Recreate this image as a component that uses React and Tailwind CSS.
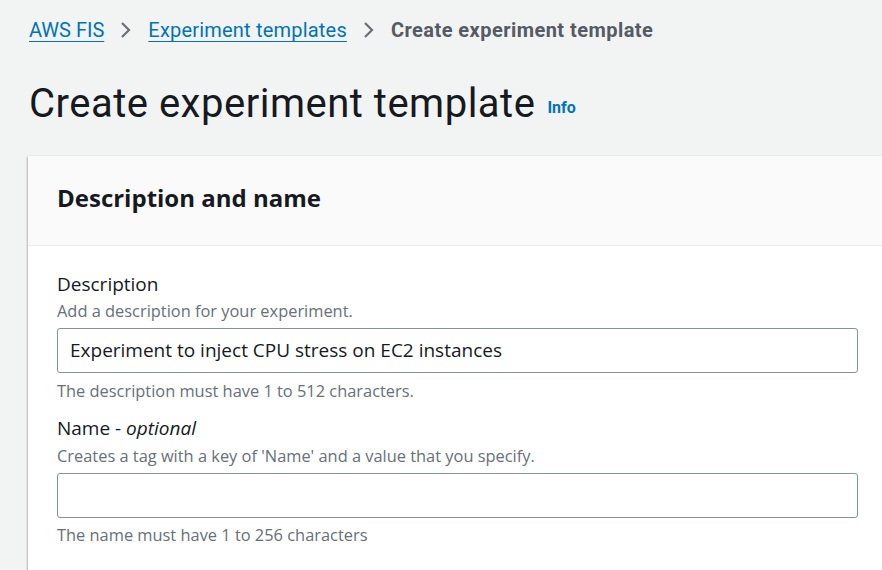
import React from "react";

function Chevron() {
  return (
    <svg width="14" height="20" viewBox="0 0 14 20" className="mx-[15px]">
      <path d="M3 3 L10 10 L3 17" fill="none" stroke="#687078" strokeWidth="2.2" />
    </svg>
  );
}

export default function App() {
  return (
    <div className="w-[882px] h-[570px] overflow-hidden bg-[#f2f3f3] font-['Open_Sans',sans-serif] text-[#16191f]">
      <div className="pl-[29px] pt-[15px]">
        <nav className="flex items-center h-[30px] font-['Roboto',sans-serif] text-[20px]">
          <a className="text-[#0073bb] underline underline-offset-4 decoration-1">AWS FIS</a>
          <Chevron />
          <a className="text-[#0073bb] underline underline-offset-4 decoration-1 tracking-[0.2px]">Experiment templates</a>
          <Chevron />
          <span className="text-[#545b64] font-bold tracking-[0.45px]">Create experiment template</span>
        </nav>
        <div className="flex items-baseline mt-[34px] h-[50px]">
          <h1 className="font-['Roboto',sans-serif] font-normal text-[40px] leading-[50px] tracking-[0.5px]">Create experiment template</h1>
          <span className="ml-[12px] text-[#0073bb] font-bold text-[16px] font-['Roboto',sans-serif] relative top-[-4px]">Info</span>
        </div>
      </div>
      <div className="ml-[28px] mt-[27px] bg-white shadow-[0_1px_2px_rgba(0,28,36,0.3),1px_1px_2px_rgba(0,28,36,0.15),-1px_1px_2px_rgba(0,28,36,0.15)]">
        <div className="h-[90px] bg-[#fafafa] border-b border-[#eaeded] flex items-center pl-[29px] pb-[6px]">
          <h2 className="text-[24px] font-bold">Description and name</h2>
        </div>
        <div className="pl-[29px] pr-[24px] pt-[25px]">
          <div className="text-[19px] leading-[26px]">Description</div>
          <div className="text-[16.4px] leading-[22px] text-[#687078] mt-[3px]">Add a description for your experiment.</div>
          <div className="mt-[6px] h-[45px] w-[801px] border border-[#879196] rounded-[3px] flex items-center pl-[12px] text-[19px]">
            Experiment to inject CPU stress on EC2 instances
          </div>
          <div className="text-[16.4px] leading-[22px] text-[#687078] mt-[7px]">The description must have 1 to 512 characters.</div>
          <div className="text-[19px] leading-[26px] mt-[13px]">Name - <i>optional</i></div>
          <div className="text-[16.4px] leading-[22px] text-[#687078] mt-[4px]">Creates a tag with a key of 'Name' and a value that you specify.</div>
          <div className="mt-[6px] h-[45px] w-[801px] border border-[#879196] rounded-[3px]"></div>
          <div className="text-[16.4px] leading-[22px] text-[#687078] mt-[6px] pb-[40px]">The name must have 1 to 256 characters</div>
        </div>
      </div>
    </div>
  );
}
